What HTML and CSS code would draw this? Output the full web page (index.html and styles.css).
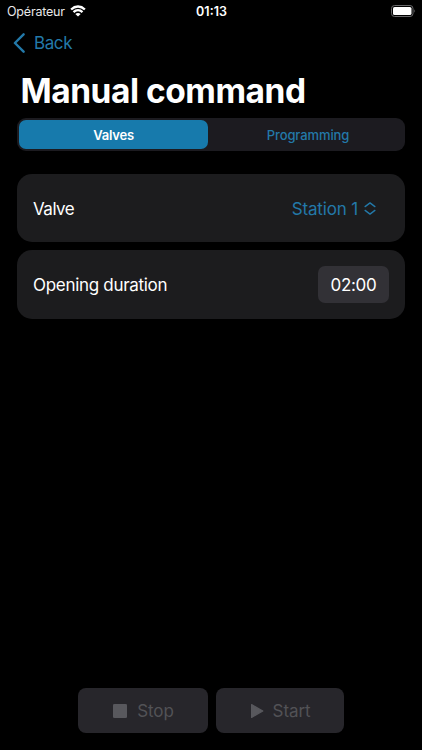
FILE: index.html
```html
<!DOCTYPE html>
<html lang="en">
<head>
<meta charset="utf-8">
<title>Manual command</title>
<link rel="stylesheet" href="styles.css">
</head>
<body>
<div class="screen">
  <header class="status">
    <div class="carrier"><span>Opérateur</span>
      <svg width="16" height="12" viewBox="0 0 16 12" fill="none" stroke="#fff" stroke-width="2.3"><path d="M1.1 4.5Q4.2 1.5 8 1.5T14.9 4.5M3.5 7.1Q5.5 5.2 8 5.2T12.5 7.1"/><path d="M5.3 8.9Q8 7 10.7 8.9L8 11.6Z" fill="#fff" stroke="none"/></svg>
    </div>
    <time class="clock">01:13</time>
    <div class="battery"><svg width="25" height="12" viewBox="0 0 25 12"><rect x=".5" y=".5" width="21.5" height="11" rx="3" fill="none" stroke="#68686a"/><rect x="2" y="2" width="18.5" height="8" rx="1.6" fill="#fff"/><path d="M23.3 4.2Q25 6 23.3 7.8Z" fill="#68686a"/></svg></div>
  </header>
  <nav class="nav">
    <svg width="12" height="20" viewBox="0 0 12 20" fill="none" stroke="#2379a9" stroke-width="2.4" stroke-linecap="round" stroke-linejoin="round"><path d="M10.6 1.3 1.9 10l8.7 8.7"/></svg>
    <span>Back</span>
  </nav>
  <h1 class="title">Manual command</h1>
  <div class="tabs">
    <div class="tab active">Valves</div>
    <div class="tab"><span class="programming">Programming</span></div>
  </div>
  <section class="card valve">
    <span class="valve-label">Valve</span>
    <div class="picker"><span>Station 1</span>
      <svg width="12" height="14" viewBox="0 0 12 14" fill="none" stroke="#2379a9" stroke-width="1.35" stroke-linecap="round" stroke-linejoin="round"><path d="M1.1 4.6 6 .9 10.9 4.6M1.1 8.4 6 12.1l4.9-3.7"/></svg>
    </div>
  </section>
  <section class="card duration">
    <span class="duration-label">Opening duration</span>
    <div class="time">02:00</div>
  </section>
  <footer class="actions">
    <div class="button stop"><svg width="14" height="14" viewBox="0 0 14 14"><rect width="14" height="14" rx="1.3" fill="#58585d"/></svg><span>Stop</span></div>
    <div class="button start"><svg width="14" height="16" viewBox="0 0 14 16"><path d="M1.6 1.6 12.8 8 1.6 14.4Z" fill="#58585d" stroke="#58585d" stroke-width="1.2" stroke-linejoin="round"/></svg><span>Start</span></div>
  </footer>
</div>
</body>
</html>
```
FILE: styles.css
```css
* { box-sizing: border-box; }
body { margin: 0; background: #000; color: #fff; font-family: Inter, "Liberation Sans", sans-serif; }
.screen { height: 750px; width: 422px; display: flex; flex-direction: column; overflow: hidden; }
svg { display: block; flex: none; }
span, time { white-space: nowrap; }
.status { height: 22px; display: grid; grid-template-columns: 1fr auto 1fr; align-items: center; padding: 0 6px 0 7px; font-size: 12.5px; }
.carrier { display: flex; align-items: center; gap: 5px; color: #e8e8e8; letter-spacing: -.2px; }
.carrier svg { margin-top: -1px; }
.clock { font-weight: 600; }
.battery { display: flex; justify-content: flex-end; margin-top: -1px; }
.nav { height: 42px; display: flex; align-items: center; gap: 9px; padding-left: 13px; color: #2379a9; font-size: 17px; letter-spacing: -.4px; }
.title { margin: 0 0 0 20.5px; height: 54px; line-height: 55px; font-size: 33.5px; font-weight: 700; letter-spacing: -.47px; white-space: nowrap; }
.tabs { height: 33px; margin: 0 17px; padding: 2px; display: grid; grid-template-columns: 189px 1fr; background: #1c1b20; border-radius: 9px; }
.tab { display: flex; align-items: center; justify-content: center; color: #2379a9; font-size: 13px; font-weight: 500; }
.programming { margin-left: 5px; letter-spacing: -.1px; }
.active { color: #fff; font-weight: 600; letter-spacing: -.2px; background: #177aac; border-radius: 7px; }
.card { margin: 0 17px; padding: 0 16px; background: #1c1c1e; border-radius: 15px; display: flex; align-items: center; justify-content: space-between; font-size: 17px; letter-spacing: -.3px; }
.valve { height: 68px; margin-top: 23px; padding-top: 1px; }
.valve-label { letter-spacing: -.5px; }
.duration { height: 69px; margin-top: 8px; }
.picker { display: flex; align-items: center; gap: 6px; color: #2379a9; margin-right: 13px; letter-spacing: -.15px; }
.time { width: 71px; height: 37px; display: flex; align-items: center; justify-content: center; background: #323136; border-radius: 7px; }
.actions { margin-top: auto; margin-bottom: 17px; display: flex; gap: 8px; padding-left: 78px; }
.button { height: 45px; display: flex; align-items: center; justify-content: center; gap: 10px; background: #27262b; color: #525256; border-radius: 8px; font-size: 17px; }
.button span { letter-spacing: -.1px; }
.stop { width: 130px; padding-left: 1px; }
.start { width: 128px; gap: 9px; }
```
